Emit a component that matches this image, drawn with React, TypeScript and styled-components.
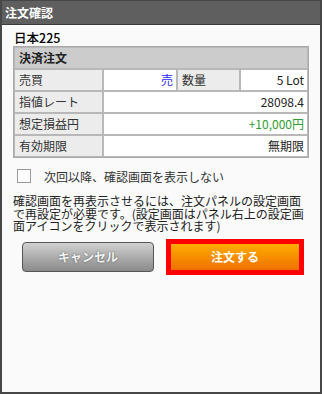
import React from 'react'
import styled, { createGlobalStyle } from 'styled-components'

const GlobalStyle = createGlobalStyle`
  html, body {
    margin: 0;
    padding: 0;
    background: #ffffff;
  }
  body {
    font-family: "Noto Sans CJK JP", "Noto Sans", sans-serif;
    font-size: 12px;
    color: #222;
  }
`

type Row = {
  label: string
  value: string
  tone?: 'plain' | 'buy' | 'profit'
}

const rows: Row[] = [
  { label: '指値レート', value: '28098.4' },
  { label: '想定損益円', value: '+10,000円', tone: 'profit' },
  { label: '有効期限', value: '無期限' },
]

export default function App() {
  return (
    <>
      <GlobalStyle />
      <Frame>
        <TitleBar>注文確認</TitleBar>
        <Body>
          <Symbol>日本225</Symbol>
          <OrderTable>
            <colgroup>
              <col style={{ width: 89 }} />
              <col style={{ width: 74 }} />
              <col style={{ width: 63 }} />
              <col />
            </colgroup>
            <tbody>
              <tr>
                <HeadCell colSpan={4}>決済注文</HeadCell>
              </tr>
              <tr>
                <LabelCell>売買</LabelCell>
                <ValueCell tone="buy">売</ValueCell>
                <LabelCell>数量</LabelCell>
                <ValueCell>5 Lot</ValueCell>
              </tr>
              {rows.map((r) => (
                <tr key={r.label}>
                  <LabelCell>{r.label}</LabelCell>
                  <ValueCell colSpan={3} tone={r.tone}>
                    {r.value}
                  </ValueCell>
                </tr>
              ))}
            </tbody>
          </OrderTable>

          <CheckRow>
            <CheckBox />
            <CheckLabel>次回以降、確認画面を表示しない</CheckLabel>
          </CheckRow>

          <Note>
            確認画面を再表示させるには、注文パネルの設定画面で再設定が必要です。(設定画面はパネル右上の設定画面アイコンをクリックで表示されます)
          </Note>

          <ButtonRow>
            <CancelButton>キャンセル</CancelButton>
            <OrderButton>注文する</OrderButton>
          </ButtonRow>
        </Body>
      </Frame>
    </>
  )
}

const Frame = styled.div`
  width: 322px;
  height: 394px;
  box-sizing: border-box;
  border: 2px solid #474747;
  border-top-width: 1px;
  background: #fafafa;
  display: flex;
  flex-direction: column;
`

const TitleBar = styled.div`
  height: 23px;
  line-height: 23px;
  padding-left: 3px;
  background: #5f5f5f;
  border-bottom: 1px solid #3a3a3a;
  color: #ffffff;
  font-weight: bold;
  font-size: 12px;
`

const Body = styled.div`
  padding: 0 11px;
  display: flex;
  flex-direction: column;
`

const Symbol = styled.div`
  margin-top: 5px;
  padding-left: 1px;
  height: 16px;
  line-height: 16px;
  font-size: 12.5px;
  font-weight: 500;
  color: #000;
`

const OrderTable = styled.table`
  width: 296px;
  table-layout: fixed;
  border-collapse: separate;
  border-spacing: 0;
  border: 1px solid #a9a9a9;
`

const HeadCell = styled.td`
  height: 20px;
  padding: 0 4px;
  background: #cccccc;
  border: 1px solid #b8b8b8;
  font-weight: bold;
  font-size: 12px;
  color: #222;
  line-height: 20px;
`

const LabelCell = styled.td`
  height: 20px;
  padding: 0 4px;
  background: #ececec;
  border: 1px solid #b8b8b8;
  color: #333;
  line-height: 20px;
  white-space: nowrap;
`

const toneColor = {
  plain: '#222',
  buy: '#2626ff',
  profit: '#2f9d2f',
}

const ValueCell = styled.td<{ tone?: 'plain' | 'buy' | 'profit' }>`
  height: 20px;
  padding: 0 3px;
  background: #ffffff;
  border: 1px solid #b8b8b8;
  text-align: right;
  line-height: 20px;
  color: ${({ tone }) => toneColor[tone ?? 'plain']};
`

const CheckRow = styled.div`
  margin-top: 8px;
  height: 20px;
  display: flex;
  align-items: center;
  padding-left: 4px;
  gap: 13px;
`

const CheckBox = styled.span`
  width: 12px;
  height: 12px;
  border: 1px solid #9a9a9a;
  background: #ffffff;
`

const CheckLabel = styled.span`
  color: #333;
  font-size: 12px;
`

const Note = styled.p`
  margin: 9px 0 0;
  font-size: 12px;
  line-height: 12.5px;
  color: #222;
  word-break: break-all;
`

const ButtonRow = styled.div`
  margin-top: 6px;
  padding-left: 9px;
  display: flex;
  align-items: center;
  gap: 12px;
`

const CancelButton = styled.button`
  width: 132px;
  height: 30px;
  box-sizing: border-box;
  border: 1px solid #555555;
  border-radius: 4px;
  background: linear-gradient(#d0d0d0, #8a8a8a);
  color: #f2f2f2;
  font-family: inherit;
  font-weight: bold;
  font-size: 12px;
  text-shadow: 0 0 2px #555;
  padding: 0;
`

const OrderButton = styled.button`
  width: 138px;
  height: 36px;
  box-sizing: border-box;
  border: 5px solid #ff0000;
  background: linear-gradient(#ffad00, #ef7000);
  color: #ffffff;
  font-family: inherit;
  font-weight: bold;
  font-size: 12px;
  padding: 0;
`
